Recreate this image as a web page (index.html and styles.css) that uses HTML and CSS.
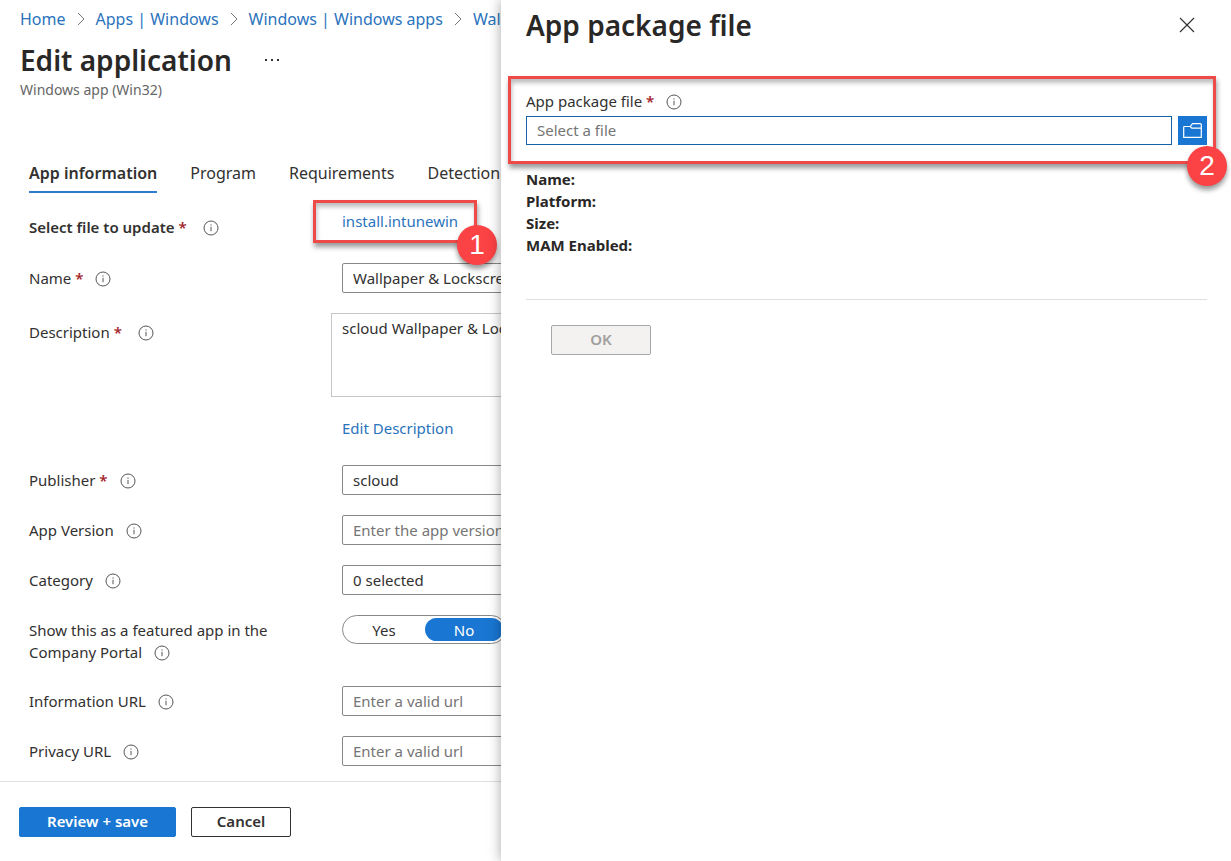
FILE: index.html
```html
<!DOCTYPE html>
<html lang="en">
<head>
<meta charset="utf-8">
<title>Edit application</title>
<link rel="stylesheet" href="styles.css">
</head>
<body>
<svg class="sprite" width="0" height="0" aria-hidden="true">
  <symbol id="info" viewBox="0 0 16 16"><circle cx="8" cy="8" r="7" fill="none" stroke="currentColor"/><path d="M8 6.8v4.4M8 4.4v1.2" stroke="currentColor" fill="none"/></symbol>
  <symbol id="chevron" viewBox="0 0 8 14"><path d="M1 1l6 6-6 6" stroke="currentColor" fill="none"/></symbol>
</svg>
<div class="layout">
  <main class="blade">
    <nav class="breadcrumb" aria-label="Breadcrumb">
      <a href="#">Home</a><svg class="chevron"><use href="#chevron"/></svg>
      <a href="#">Apps | Windows</a><svg class="chevron"><use href="#chevron"/></svg>
      <a href="#">Windows | Windows apps</a><svg class="chevron"><use href="#chevron"/></svg>
      <a href="#">Wallpaper</a>
    </nav>
    <header class="heading">
      <div class="heading-row">
        <h1 class="title">Edit application</h1>
        <button class="more" type="button" aria-label="More"><svg width="16" height="4" viewBox="0 0 16 4"><path d="M1 1h2v2H1zM7 1h2v2H7zM13 1h2v2h-2z" fill="currentColor"/></svg></button>
      </div>
      <p class="subtitle">Windows app (Win32)</p>
    </header>
    <nav class="tabs" aria-label="Sections">
      <a class="tab tab-active" href="#">App information</a>
      <a class="tab" href="#">Program</a>
      <a class="tab" href="#">Requirements</a>
      <a class="tab" href="#">Detection rules</a>
    </nav>
    <form class="form" id="app-form">
      <div class="row row-file">
        <span class="label label-strong">Select file to update <span class="required required-wide">*</span><svg class="info"><use href="#info"/></svg></span>
        <div class="callout callout-link"><a class="link" href="#">install.intunewin</a><span class="badge">1</span></div>
      </div>
      <div class="row">
        <label class="label" for="name">Name <span class="required">*</span><svg class="info"><use href="#info"/></svg></label>
        <input class="field" id="name" type="text" value="Wallpaper &amp; Lockscreen">
      </div>
      <div class="row row-description">
        <label class="label" for="description">Description <span class="required required-wide">*</span><svg class="info"><use href="#info"/></svg></label>
        <div class="description">
          <textarea class="area" id="description">scloud Wallpaper &amp; Lockscreen</textarea>
          <a class="link" href="#">Edit Description</a>
        </div>
      </div>
      <div class="row">
        <label class="label" for="publisher">Publisher <span class="required">*</span><svg class="info"><use href="#info"/></svg></label>
        <input class="field" id="publisher" type="text" value="scloud">
      </div>
      <div class="row">
        <label class="label" for="version">App Version<svg class="info"><use href="#info"/></svg></label>
        <input class="field" id="version" type="text" placeholder="Enter the app version">
      </div>
      <div class="row">
        <label class="label" for="category">Category<svg class="info"><use href="#info"/></svg></label>
        <select class="field" id="category"><option>0 selected</option></select>
      </div>
      <div class="row row-featured">
        <span class="label" id="featured-label">Show this as a featured app in the Company Portal<svg class="info"><use href="#info"/></svg></span>
        <div class="toggle" role="radiogroup" aria-labelledby="featured-label">
          <label class="choice"><input class="choice-input" type="radio" name="featured">Yes</label>
          <label class="choice choice-on"><input class="choice-input" type="radio" name="featured" checked>No</label>
        </div>
      </div>
      <div class="row">
        <label class="label" for="info-url">Information URL<svg class="info"><use href="#info"/></svg></label>
        <input class="field" id="info-url" type="text" placeholder="Enter a valid url">
      </div>
      <div class="row">
        <label class="label" for="privacy-url">Privacy URL<svg class="info"><use href="#info"/></svg></label>
        <input class="field" id="privacy-url" type="text" placeholder="Enter a valid url">
      </div>
    </form>
    <footer class="footer">
      <button class="button button-primary" type="submit" form="app-form">Review + save</button>
      <button class="button" type="button">Cancel</button>
    </footer>
  </main>
  <aside class="panel">
    <header class="panel-head">
      <h2 class="title">App package file</h2>
      <button class="close" type="button" aria-label="Close"><svg width="16" height="16" viewBox="0 0 16 16"><path d="M1 1l14 14M15 1L1 15" stroke="currentColor" stroke-width="1.2" fill="none"/></svg></button>
    </header>
    <div class="callout callout-file">
      <label class="label" for="file">App package file <span class="required">*</span><svg class="info"><use href="#info"/></svg></label>
      <div class="picker">
        <input class="field field-file" id="file" type="text" placeholder="Select a file">
        <button class="browse" type="button" aria-label="Browse"><svg width="19" height="15" viewBox="0 0 19 15"><path d="M.7 3.5h6.6l1.5 1.6h9.5M7.3 3.5l2.2-2.8h8l.8.8v12.8H.7V3.5" stroke="currentColor" stroke-width="1.2" fill="none"/></svg></button>
      </div>
      <span class="badge">2</span>
    </div>
    <dl class="facts">
      <dt>Name:</dt>
      <dt>Platform:</dt>
      <dt>Size:</dt>
      <dt>MAM Enabled:</dt>
    </dl>
    <div class="panel-actions">
      <button class="button" type="button" disabled>OK</button>
    </div>
  </aside>
</div>
</body>
</html>
```

FILE: styles.css
```css
* { box-sizing: border-box; }
body {
  margin: 0;
  color: #323130;
  background: #fff;
  font: 15px/22px "Noto Sans", "Open Sans", sans-serif;
}
button, input, select, textarea { font: inherit; color: inherit; }
a { text-decoration: none; }
.sprite { position: absolute; }

.layout {
  display: grid;
  grid-template-columns: 501fr 730fr;
  min-height: 100vh;
}
.blade {
  display: flex;
  flex-direction: column;
  min-width: 0;
  overflow: hidden;
}

.breadcrumb {
  display: flex;
  align-items: center;
  gap: 11px;
  padding: 7px 20px 0;
  font-size: 16px;
  line-height: 24px;
  white-space: nowrap;
}
.breadcrumb a, .link { color: #2a73bd; }
.chevron { flex: none; width: 8px; height: 14px; color: #777; }

.heading { padding: 9px 20px 0; }
.heading-row { display: flex; align-items: center; gap: 32px; }
.title { margin: 0; color: #292827; font-size: 28px; line-height: 40px; font-weight: 600; }
.more { display: flex; padding: 0; border: 0; background: none; }
.subtitle { margin: 0; font-size: 14px; line-height: 20px; color: #666; }

.tabs {
  display: flex;
  gap: 33px;
  padding: 55px 0 0 29px;
  font-size: 16px;
  line-height: 36px;
  white-space: nowrap;
}
.tab { color: inherit; border-bottom: 2px solid transparent; }
.tab-active { font-weight: 600; border-color: #2f7bc9; }

.form {
  flex: 1;
  display: flex;
  flex-direction: column;
  gap: 20px;
  padding: 7px 0 15px 29px;
}
.row { display: grid; grid-template-columns: 253px 400px; column-gap: 60px; }
.label { padding-top: 4px; }
.label-strong { font-weight: 600; }
.required { color: #a4262c; font-weight: 600; }
.required-wide { margin-right: 4px; }
.info {
  width: 16px;
  height: 16px;
  margin-left: 12px;
  vertical-align: -3px;
  color: #555;
}
.row-file .label { padding-top: 16px; }

.callout {
  position: relative;
  border: 3px solid #ee4b48;
  box-shadow: 1px 4px 5px rgba(0, 0, 0, .4), inset 1px 4px 4px rgba(0, 0, 0, .25);
}
.callout-link {
  justify-self: start;
  margin-left: -29px;
  padding: 7px 16px 8px 26px;
}
.badge {
  position: absolute;
  right: -23px;
  bottom: -25px;
  width: 40px;
  height: 40px;
  border-radius: 50%;
  background: #fb4244;
  box-shadow: 0 4px 5px rgba(0, 0, 0, .4);
  color: #fff;
  font: 28px/40px "Liberation Sans", sans-serif;
  text-align: center;
}

.field {
  width: 100%;
  height: 30px;
  padding: 0 10px;
  border: 1px solid #8a8886;
  border-radius: 2px;
  background: #fff;
  outline: 0;
  appearance: none;
}
.field::placeholder { color: #757575; opacity: 1; }
.row-description .label { padding-top: 8px; }
.description { display: flex; flex-direction: column; gap: 20px; padding-bottom: 6px; }
.area {
  display: block;
  height: 84px;
  margin-left: -11px;
  padding: 3px 10px;
  border: 1px solid #c8c6c4;
  resize: none;
}

.row-featured { padding-bottom: 3px; }
.toggle {
  display: flex;
  gap: 2px;
  width: 164px;
  height: 29px;
  padding: 2px;
  border: 1px solid #8a8886;
  border-radius: 15px;
}
.choice { flex: 1; border-radius: 12px; line-height: 24px; text-align: center; }
.choice-on { background: #1977d3; color: #fff; }
.choice-input { position: absolute; opacity: 0; margin: 0; }

.footer {
  display: flex;
  gap: 15px;
  padding: 25px 19px 24px;
  border-top: 1px solid #e1dfdd;
}
.button {
  min-width: 100px;
  height: 30px;
  padding: 0 24px 2px;
  border: 1px solid #323130;
  border-radius: 2px;
  background: #fff;
  font-weight: 600;
  line-height: 22px;
}
.button-primary { padding: 0 27px 2px; border-color: #1977d3; background: #1977d3; color: #fff; }
.button:disabled { border-color: #a9a7a5; background: #f3f2f1; color: #a19f9d; }

.panel {
  position: relative;
  padding: 5px 24px 24px 25px;
  background: #fff;
  box-shadow: 0 0 12px rgba(0, 0, 0, .35);
}
.panel-head { display: flex; justify-content: space-between; align-items: center; }
.close { display: flex; margin-right: 12px; padding: 0; border: 0; background: none; color: #333; }
.callout-file { margin: 31px -9px 0 -18px; padding: 7px 6px 16px 15px; }
.callout-file .label { display: block; }
.picker { display: flex; gap: 6px; padding-top: 4px; }
.field-file { flex: 1; height: 29px; padding-bottom: 2px; border-color: #1762a5; border-radius: 0; }
.browse {
  display: grid;
  place-items: center;
  width: 29px;
  height: 29px;
  padding: 0;
  border: 0;
  background: #1977d3;
  color: #fff;
}
.callout-file .badge { right: -14px; }
.facts {
  margin: 0;
  padding: 4px 0 43px;
  border-bottom: 1px solid #e1dfdd;
  color: #292827;
  font-weight: 700;
}
.panel-actions { padding: 25px; }
```
